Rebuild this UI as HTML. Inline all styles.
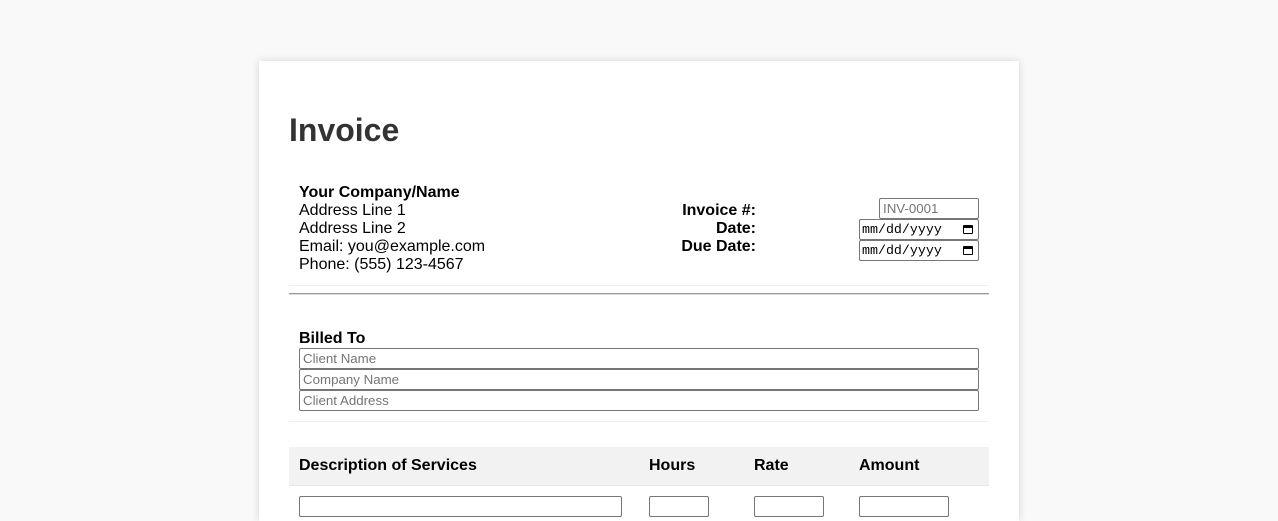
<!DOCTYPE html>
<html><head><style>
body{margin:0;width:1278px;height:501px;background:#f9f9f9;font-family:"Liberation Sans",Arial,sans-serif;overflow:hidden;position:relative}
.card{position:absolute;left:259px;top:61px;width:760px;height:460px;background:#fff;box-shadow:0 0 8px rgba(0,0,0,.15)}
.a{position:absolute;white-space:nowrap}
.t{font-size:16px;color:#000;line-height:18px}
input{position:absolute;box-sizing:border-box;border:1px solid #767676;border-radius:2px;font-family:"Liberation Sans",Arial,sans-serif;font-size:13.3px;padding:0 3px;margin:0;background:#fff;color:#757575}
.cal{position:absolute;width:10px;height:9px;border:1.5px solid #000;border-top-width:3px;border-radius:1px;box-sizing:border-box}
.dt{left:859px;width:120px;height:21px;border:1px solid #767676;border-radius:2px;box-sizing:border-box;font-family:'Liberation Mono',monospace;font-size:13.3px;line-height:20px;padding-left:2px}
b{font-weight:bold}
</style></head><body>
<div class="card"></div>
<div class="a" style="left:289px;top:112px;font-size:32px;font-weight:bold;color:#333">Invoice</div>
<div class="a t" style="left:299px;top:184px"><b>Your Company/Name</b><br>Address Line 1<br>Address Line 2<br>Email: you@example.com<br>Phone: (555) 123-4567</div>
<div class="a t" style="left:640px;top:202px;width:116px;text-align:right;font-weight:bold">Invoice #:<br>Date:<br>Due Date:</div>
<input style="left:879px;top:198px;width:100px;height:21px" value="INV-0001">
<div class="a dt" style="top:219px">mm/dd/yyyy<span class="cal" style="left:103px;top:5px"></span></div>
<div class="a dt" style="top:240px">mm/dd/yyyy<span class="cal" style="left:103px;top:5px"></span></div>
<div class="a" style="left:289px;top:285px;width:700px;height:1px;background:#eee"></div>
<div class="a" style="left:289px;top:293px;width:700px;height:2px;background:#999;border-bottom:1px solid #ddd;box-sizing:border-box"></div>
<div class="a t" style="left:299px;top:330px;font-weight:bold">Billed To</div>
<input style="left:299px;top:348px;width:680px;height:21px" value="Client Name">
<input style="left:299px;top:369px;width:680px;height:21px" value="Company Name">
<input style="left:299px;top:390px;width:680px;height:21px" value="Client Address">
<div class="a" style="left:289px;top:421px;width:700px;height:1px;background:#eee"></div>
<div class="a" style="left:289px;top:447px;width:700px;height:38px;background:#f2f2f2;border-bottom:1px solid #e5e5e5"></div>
<div class="a t" style="left:299px;top:457px;font-weight:bold">Description of Services</div>
<div class="a t" style="left:649px;top:457px;font-weight:bold">Hours</div>
<div class="a t" style="left:754px;top:457px;font-weight:bold">Rate</div>
<div class="a t" style="left:859px;top:457px;font-weight:bold">Amount</div>
<input style="left:299px;top:496px;width:323px;height:21px" value="">
<input style="left:649px;top:496px;width:60px;height:21px" value="">
<input style="left:754px;top:496px;width:70px;height:21px" value="">
<input style="left:859px;top:496px;width:90px;height:21px" value="">
</body></html>
